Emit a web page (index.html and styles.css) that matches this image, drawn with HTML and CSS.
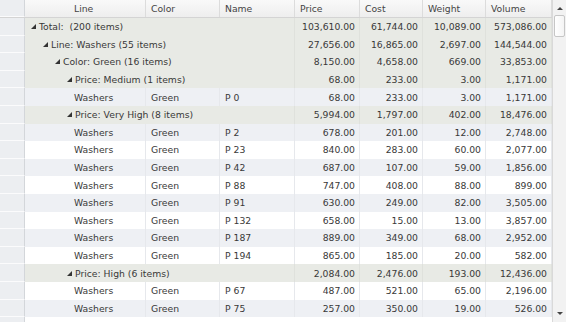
FILE: index.html
```html
<!DOCTYPE html>
<html lang="en">
<head>
    <meta charset="UTF-8">
    <title>Grouped grid</title>
    <link rel="stylesheet" href="styles.css">
</head>
<body>
<div class="view">
    <div class="grid">
        <div class="row head">
            <div class="strip"></div>
            <div class="hc indent"></div>
            <div class="hc">Line</div>
            <div class="hc">Color</div>
            <div class="hc">Name</div>
            <div class="hc">Price</div>
            <div class="hc">Cost</div>
            <div class="hc">Weight</div>
            <div class="hc">Volume</div>
        </div>

        <div class="row group">
            <div class="strip"></div>
            <div class="label l0"><i class="tri"></i>Total:&nbsp; (200 items)</div>
            <div class="num">103,610.00</div><div class="num">61,744.00</div><div class="num">10,089.00</div><div class="num">573,086.00</div>
        </div>
        <div class="row group">
            <div class="strip"></div>
            <div class="label l1"><i class="tri"></i>Line: Washers (55 items)</div>
            <div class="num">27,656.00</div><div class="num">16,865.00</div><div class="num">2,697.00</div><div class="num">144,544.00</div>
        </div>
        <div class="row group">
            <div class="strip"></div>
            <div class="label l2"><i class="tri"></i>Color: Green (16 items)</div>
            <div class="num">8,150.00</div><div class="num">4,658.00</div><div class="num">669.00</div><div class="num">33,853.00</div>
        </div>
        <div class="row group">
            <div class="strip"></div>
            <div class="label l3"><i class="tri"></i>Price: Medium (1 items)</div>
            <div class="num">68.00</div><div class="num">233.00</div><div class="num">3.00</div><div class="num">1,171.00</div>
        </div>
        <div class="row alt">
            <div class="strip"></div><div class="indent"></div>
            <div class="txt">Washers</div><div class="txt">Green</div><div class="txt">P 0</div>
            <div class="num">68.00</div><div class="num">233.00</div><div class="num">3.00</div><div class="num">1,171.00</div>
        </div>
        <div class="row group">
            <div class="strip"></div>
            <div class="label l3"><i class="tri"></i>Price: Very High (8 items)</div>
            <div class="num">5,994.00</div><div class="num">1,797.00</div><div class="num">402.00</div><div class="num">18,476.00</div>
        </div>
        <div class="row alt">
            <div class="strip"></div><div class="indent"></div>
            <div class="txt">Washers</div><div class="txt">Green</div><div class="txt">P 2</div>
            <div class="num">678.00</div><div class="num">201.00</div><div class="num">12.00</div><div class="num">2,748.00</div>
        </div>
        <div class="row">
            <div class="strip"></div><div class="indent"></div>
            <div class="txt">Washers</div><div class="txt">Green</div><div class="txt">P 23</div>
            <div class="num">840.00</div><div class="num">283.00</div><div class="num">60.00</div><div class="num">2,077.00</div>
        </div>
        <div class="row alt">
            <div class="strip"></div><div class="indent"></div>
            <div class="txt">Washers</div><div class="txt">Green</div><div class="txt">P 42</div>
            <div class="num">687.00</div><div class="num">107.00</div><div class="num">59.00</div><div class="num">1,856.00</div>
        </div>
        <div class="row">
            <div class="strip"></div><div class="indent"></div>
            <div class="txt">Washers</div><div class="txt">Green</div><div class="txt">P 88</div>
            <div class="num">747.00</div><div class="num">408.00</div><div class="num">88.00</div><div class="num">899.00</div>
        </div>
        <div class="row alt">
            <div class="strip"></div><div class="indent"></div>
            <div class="txt">Washers</div><div class="txt">Green</div><div class="txt">P 91</div>
            <div class="num">630.00</div><div class="num">249.00</div><div class="num">82.00</div><div class="num">3,505.00</div>
        </div>
        <div class="row">
            <div class="strip"></div><div class="indent"></div>
            <div class="txt">Washers</div><div class="txt">Green</div><div class="txt">P 132</div>
            <div class="num">658.00</div><div class="num">15.00</div><div class="num">13.00</div><div class="num">3,857.00</div>
        </div>
        <div class="row alt">
            <div class="strip"></div><div class="indent"></div>
            <div class="txt">Washers</div><div class="txt">Green</div><div class="txt">P 187</div>
            <div class="num">889.00</div><div class="num">349.00</div><div class="num">68.00</div><div class="num">2,952.00</div>
        </div>
        <div class="row">
            <div class="strip"></div><div class="indent"></div>
            <div class="txt">Washers</div><div class="txt">Green</div><div class="txt">P 194</div>
            <div class="num">865.00</div><div class="num">185.00</div><div class="num">20.00</div><div class="num">582.00</div>
        </div>
        <div class="row group">
            <div class="strip"></div>
            <div class="label l3"><i class="tri"></i>Price: High (6 items)</div>
            <div class="num">2,084.00</div><div class="num">2,476.00</div><div class="num">193.00</div><div class="num">12,436.00</div>
        </div>
        <div class="row">
            <div class="strip"></div><div class="indent"></div>
            <div class="txt">Washers</div><div class="txt">Green</div><div class="txt">P 67</div>
            <div class="num">487.00</div><div class="num">521.00</div><div class="num">65.00</div><div class="num">2,196.00</div>
        </div>
        <div class="row alt">
            <div class="strip"></div><div class="indent"></div>
            <div class="txt">Washers</div><div class="txt">Green</div><div class="txt">P 75</div>
            <div class="num">257.00</div><div class="num">350.00</div><div class="num">19.00</div><div class="num">526.00</div>
        </div>
    </div>

    <div class="scroll">
        <span class="arrow up"></span>
        <span class="thumb"></span>
        <span class="gap"></span>
        <span class="arrow down"></span>
    </div>
</div>
</body>
</html>
```

FILE: styles.css
```css
/* base */
* { margin: 0; padding: 0; box-sizing: border-box; }
body {
    font-family: "DejaVu Sans", Verdana, sans-serif;
    font-size: 9.25px;
    color: #383838;
    background: #fff;
}

.view {
    display: flex;
    width: 566px;
    height: 322px;
    overflow: hidden;
}

/* grid body, left strip continues below the rows */
.grid {
    flex: 1;
    background: linear-gradient(to right, #eceef1 0, #eceef1 24px, #d3d6da 24px, #d3d6da 25px, #fff 25px);
}

.row {
    display: grid;
    grid-template-columns: 25px 44px 77px 74px 75px 65px 63px 63px 66px;
    height: 17.6px;
    align-items: stretch;
    background: #fff;
}
.row.alt { background: #eef0f4; }
.row.group { background: #e8eae5; }

.row > div { display: flex; align-items: center; white-space: nowrap; }

.strip {
    background: #eceef1;
    border-right: 1px solid #d3d6da;
    border-bottom: 1px solid #fbfbfc;
}

/* header */
.row.head {
    height: 18px;
    background: linear-gradient(#f9f9f9, #eeeeee);
    border-bottom: 1px solid #d4d4d4;
    color: #444;
}
.hc { padding-left: 5px; border-right: 1px solid #dcdcdc; }
.hc.indent { border-right: none; }

/* data cells */
.txt { padding-left: 5px; border-right: 1px solid #e6e8ec; }
.num { justify-content: flex-end; padding-right: 4px; border-right: 1px solid #e6e8ec; }
.row.group .num { border-right-color: #dfe1dc; }

/* group labels */
.label { grid-column: 2 / 6; border-right: 1px solid #dfe1dc; }
.l0 { padding-left: 6px; }
.l1 { padding-left: 18px; }
.l2 { padding-left: 30px; }
.l3 { padding-left: 42px; }

.tri {
    display: inline-block;
    width: 0;
    height: 0;
    margin-right: 3px;
    border-left: 5px solid transparent;
    border-bottom: 5px solid #333;
}

/* scrollbar */
.scroll {
    width: 14px;
    display: flex;
    flex-direction: column;
    align-items: center;
    background: #f2f2f2;
    border-left: 1px solid #d9d9d9;
}
.arrow { width: 0; height: 0; border-left: 3px solid transparent; border-right: 3px solid transparent; }
.arrow.up { margin-top: 7px; border-bottom: 3px solid #444; }
.arrow.down { margin-bottom: 7px; border-top: 3px solid #444; }
.thumb {
    width: 11px;
    height: 22px;
    margin-top: 5px;
    background: linear-gradient(to right, #fff, #f4f4f4);
    border: 1px solid #c6c6c6;
    border-radius: 2px;
}
.gap { flex: 1; }
```
